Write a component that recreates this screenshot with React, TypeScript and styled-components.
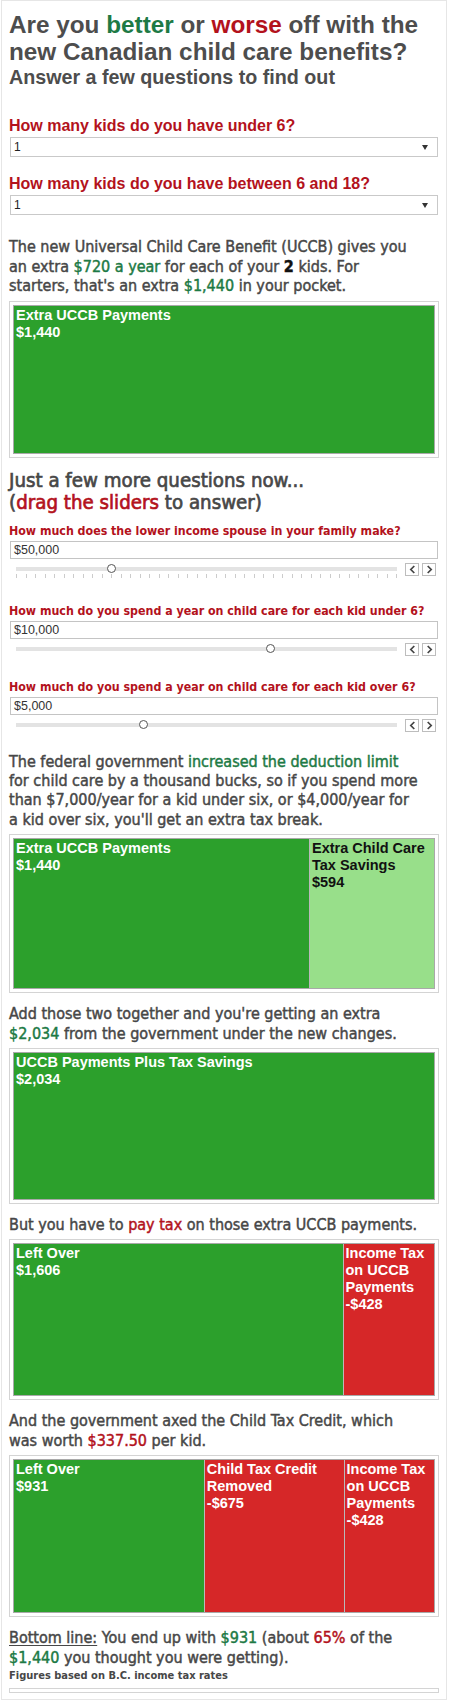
import React from "react";
import styled, { createGlobalStyle } from "styled-components";

const GREEN = "#1d7a45";
const RED = "#b3121c";
const TEXT = "#474747";
const SANS = `"Liberation Sans", Arial, Helvetica, sans-serif`;
const HUMANIST = `"DejaVu Sans Condensed", "DejaVu Sans", Verdana, sans-serif`;

const GlobalStyle = createGlobalStyle`
  html, body { margin: 0; padding: 0; background: #ffffff; }
  * { box-sizing: border-box; }
`;

const Page = styled.main`
  width: 446px;
  margin-left: 1px;
  border: 1px solid #e6e6e6;
  padding: 10px 7px 6px 7px;
  background: #ffffff;
`;

const Title = styled.h1`
  margin: 0;
  font: bold 24.3px/27.2px ${SANS};
  color: #4d4d4d;
`;

const Subtitle = styled.h2`
  margin: 0;
  font: bold 19.7px/24px ${SANS};
  color: #4d4d4d;
`;

const Good = styled.span`
  color: ${GREEN};
`;

const Bad = styled.span`
  color: ${RED};
`;

const Strong = styled.span`
  color: #111111;
  font-weight: bold;
`;

const Underlined = styled.span`
  text-decoration: underline;
  text-underline-offset: 2px;
`;

const QuestionGroup = styled.div<{ $gap: number }>`
  margin-top: ${(p) => p.$gap}px;
`;

const QuestionLabel = styled.label`
  display: block;
  font: bold 16px/19px ${SANS};
  color: ${RED};
`;

const SelectFrame = styled.div`
  position: relative;
  margin: 2px 1px 0;
  height: 20px;
  border: 1px solid #c9c9c9;
  background: #ffffff;
  padding-left: 3px;
  font: 12px/18px ${SANS};
  color: #222222;
`;

const SelectArrow = styled.span`
  position: absolute;
  right: 9px;
  top: 7px;
  width: 0;
  height: 0;
  border-left: 3.5px solid transparent;
  border-right: 3.5px solid transparent;
  border-top: 5px solid #333333;
`;

const Paragraph = styled.p<{ $gap?: number }>`
  margin: ${(p) => p.$gap ?? 11}px 0 0;
  font-family: ${HUMANIST};
  font-size: 16px;
  line-height: 19.4px;
  color: ${TEXT};
  -webkit-text-stroke: 0.45px currentColor;
`;

const Line = styled.span`
  display: block;
  white-space: nowrap;
`;

const SectionHeading = styled.h3`
  margin: 11px 0 0;
  font-family: ${HUMANIST};
  font-weight: normal;
  font-size: 20.3px;
  line-height: 22px;
  color: ${TEXT};
  -webkit-text-stroke: 0.65px currentColor;
`;

const ChartFrame = styled.div`
  margin-top: 5px;
  border: 1px solid #d4d4d4;
  padding: 3px;
`;

const Treemap = styled.div<{ $h: number }>`
  display: flex;
  gap: 1px;
  height: ${(p) => p.$h}px;
  border: 1px solid #a9a9a9;
  background: #b9b9b9;
`;

type Tone = "dark" | "light" | "red";

const toneBg: Record<Tone, string> = {
  dark: "#2ca02c",
  light: "#98df8a",
  red: "#d62728",
};

const Cell = styled.div<{ $tone: Tone; $grow: number }>`
  flex: ${(p) => p.$grow} 1 0;
  min-width: 0;
  overflow: hidden;
  background: ${(p) => toneBg[p.$tone]};
  color: ${(p) => (p.$tone === "light" ? "#111111" : "#ffffff")};
  padding: 1px 2px;
  font: bold 14.5px/17px ${SANS};
`;

const SliderGroup = styled.div<{ $gap: number }>`
  margin-top: ${(p) => p.$gap}px;
`;

const SliderLabel = styled.label`
  display: block;
  font-family: ${HUMANIST};
  font-weight: bold;
  font-size: 12.3px;
  line-height: 16px;
  color: ${RED};
`;

const ValueBox = styled.div`
  margin: 2px 1px 0;
  height: 18px;
  border: 1px solid #c4c4c4;
  background: #ffffff;
  padding-left: 3px;
  font: 12.5px/16px ${SANS};
  color: #333333;
`;

const SliderRow = styled.div`
  display: flex;
  align-items: flex-start;
  margin-top: 4px;
  padding-left: 7px;
`;

const TrackColumn = styled.div`
  width: 381px;
  display: flex;
  flex-direction: column;
`;

const TrackArea = styled.div`
  position: relative;
  height: 13px;
  display: flex;
  align-items: center;
`;

const Track = styled.div`
  width: 100%;
  height: 4px;
  background: #e3e3e3;
`;

const Thumb = styled.div`
  position: absolute;
  top: 50%;
  width: 9px;
  height: 9px;
  margin: -5px 0 0 -4.5px;
  border: 1px solid #555555;
  border-radius: 50%;
  background: #ffffff;
`;

const Ticks = styled.div`
  display: flex;
  justify-content: space-between;
  height: 4px;
  margin-top: -2px;
`;

const Tick = styled.span`
  width: 1px;
  height: 4px;
  background: #cccccc;
`;

const StepButtons = styled.div`
  display: flex;
  gap: 3px;
  margin-left: 8px;
`;

const StepButton = styled.button`
  width: 14px;
  height: 13px;
  padding: 0;
  border: 1px solid #bdbdbd;
  background: #ffffff;
  display: flex;
  align-items: center;
  justify-content: center;
`;

const Note = styled.p`
  margin: 2px 0 0;
  font-family: ${HUMANIST};
  font-weight: bold;
  font-size: 11px;
  line-height: 13px;
  color: ${TEXT};
`;

const EmptyFrame = styled.div`
  margin-top: 6px;
  height: 5px;
  border: 1px solid #d4d4d4;
`;

function Chevron({ dir }: { dir: "left" | "right" }) {
  return (
    <svg width="7" height="9" viewBox="0 0 7 9" aria-hidden="true">
      <path
        d={dir === "left" ? "M5.3 1 L1.8 4.5 L5.3 8" : "M1.7 1 L5.2 4.5 L1.7 8"}
        fill="none"
        stroke="#444"
        strokeWidth="1.7"
      />
    </svg>
  );
}

type CellData = { label: string[]; value: string; tone: Tone; amount: number };

function TreemapChart({ cells, height }: { cells: CellData[]; height: number }) {
  return (
    <ChartFrame>
      <Treemap $h={height}>
        {cells.map((c, i) => (
          <Cell key={i} $tone={c.tone} $grow={c.amount}>
            {c.label.map((l, j) => (
              <div key={j}>{l}</div>
            ))}
            <div>{c.value}</div>
          </Cell>
        ))}
      </Treemap>
    </ChartFrame>
  );
}

function Select({ label, value, gap }: { label: string; value: string; gap: number }) {
  return (
    <QuestionGroup $gap={gap}>
      <QuestionLabel>{label}</QuestionLabel>
      <SelectFrame>
        {value}
        <SelectArrow />
      </SelectFrame>
    </QuestionGroup>
  );
}

function Slider({
  label,
  value,
  fraction,
  ticks,
  gap,
}: {
  label: string;
  value: string;
  fraction: number;
  ticks?: number;
  gap: number;
}) {
  return (
    <SliderGroup $gap={gap}>
      <SliderLabel>{label}</SliderLabel>
      <ValueBox>{value}</ValueBox>
      <SliderRow>
        <TrackColumn>
          <TrackArea>
            <Track />
            <Thumb style={{ left: `${fraction * 100}%` }} />
          </TrackArea>
          {ticks ? (
            <Ticks>
              {Array.from({ length: ticks }).map((_, i) => (
                <Tick key={i} />
              ))}
            </Ticks>
          ) : null}
        </TrackColumn>
        <StepButtons>
          <StepButton aria-label="decrease">
            <Chevron dir="left" />
          </StepButton>
          <StepButton aria-label="increase">
            <Chevron dir="right" />
          </StepButton>
        </StepButtons>
      </SliderRow>
    </SliderGroup>
  );
}

export default function App() {
  return (
    <>
      <GlobalStyle />
      <Page>
        <Title>
          Are you <Good>better</Good> or <Bad>worse</Bad> off with the new Canadian child care
          benefits?
        </Title>
        <Subtitle>Answer a few questions to find out</Subtitle>

        <Select label="How many kids do you have under 6?" value="1" gap={27} />
        <Select label="How many kids do you have between 6 and 18?" value="1" gap={17} />

        <Paragraph $gap={22}>
          <Line>The new Universal Child Care Benefit (UCCB) gives you</Line>
          <Line>
            an extra <Good>$720 a year</Good> for each of your <Strong>2</Strong> kids. For
          </Line>
          <Line>
            starters, that's an extra <Good>$1,440</Good> in your pocket.
          </Line>
        </Paragraph>
        <TreemapChart
          height={149}
          cells={[{ label: ["Extra UCCB Payments"], value: "$1,440", tone: "dark", amount: 1440 }]}
        />

        <SectionHeading>
          Just a few more questions now...
          <br />(<Bad>drag the sliders</Bad> to answer)
        </SectionHeading>

        <Slider
          label="How much does the lower income spouse in your family make?"
          value="$50,000"
          fraction={0.25}
          ticks={41}
          gap={10}
        />
        <Slider
          label="How much do you spend a year on child care for each kid under 6?"
          value="$10,000"
          fraction={2 / 3}
          gap={25}
        />
        <Slider
          label="How much do you spend a year on child care for each kid over 6?"
          value="$5,000"
          fraction={1 / 3}
          gap={23}
        />

        <Paragraph $gap={20}>
          <Line>
            The federal government <Good>increased the deduction limit</Good>
          </Line>
          <Line>for child care by a thousand bucks, so if you spend more</Line>
          <Line>than $7,000/year for a kid under six, or $4,000/year for</Line>
          <Line>a kid over six, you'll get an extra tax break.</Line>
        </Paragraph>
        <TreemapChart
          height={151}
          cells={[
            { label: ["Extra UCCB Payments"], value: "$1,440", tone: "dark", amount: 1440 },
            { label: ["Extra Child Care Tax Savings"], value: "$594", tone: "light", amount: 594 },
          ]}
        />

        <Paragraph>
          <Line>Add those two together and you're getting an extra</Line>
          <Line>
            <Good>$2,034</Good> from the government under the new changes.
          </Line>
        </Paragraph>
        <TreemapChart
          height={148}
          cells={[
            { label: ["UCCB Payments Plus Tax Savings"], value: "$2,034", tone: "dark", amount: 2034 },
          ]}
        />

        <Paragraph>
          <Line>
            But you have to <Bad>pay tax</Bad> on those extra UCCB payments.
          </Line>
        </Paragraph>
        <TreemapChart
          height={153}
          cells={[
            { label: ["Left Over"], value: "$1,606", tone: "dark", amount: 1606 },
            { label: ["Income Tax on UCCB Payments"], value: "-$428", tone: "red", amount: 428 },
          ]}
        />

        <Paragraph>
          <Line>And the government axed the Child Tax Credit, which</Line>
          <Line>
            was worth <Bad>$337.50</Bad> per kid.
          </Line>
        </Paragraph>
        <TreemapChart
          height={154}
          cells={[
            { label: ["Left Over"], value: "$931", tone: "dark", amount: 931 },
            { label: ["Child Tax Credit Removed"], value: "-$675", tone: "red", amount: 675 },
            { label: ["Income Tax on UCCB Payments"], value: "-$428", tone: "red", amount: 428 },
          ]}
        />

        <Paragraph>
          <Line>
            <Underlined>Bottom line:</Underlined> You end up with <Good>$931</Good> (about{" "}
            <Bad>65%</Bad> of the
          </Line>
          <Line>
            <Good>$1,440</Good> you thought you were getting).
          </Line>
        </Paragraph>
        <Note>Figures based on B.C. income tax rates</Note>
        <EmptyFrame />
      </Page>
    </>
  );
}
